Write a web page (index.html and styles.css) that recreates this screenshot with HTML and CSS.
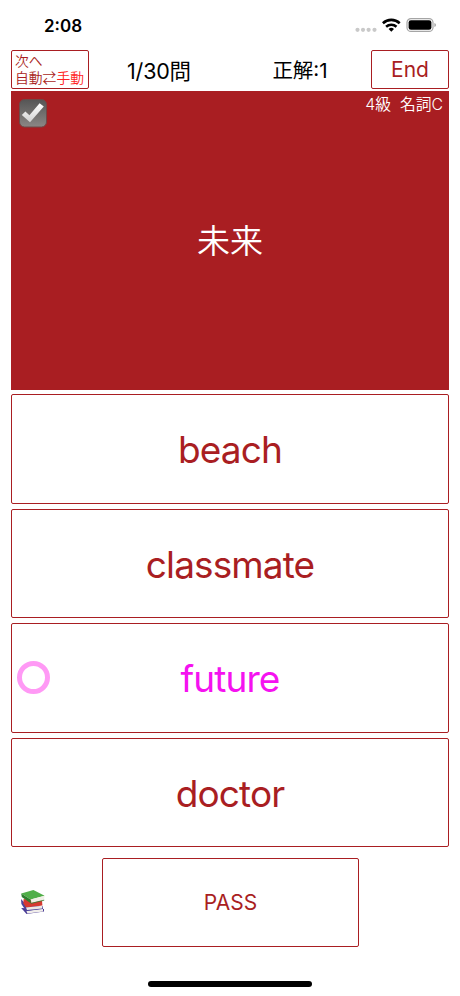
FILE: index.html
```html
<!DOCTYPE html>
<html lang="ja">
<head>
  <meta charset="UTF-8" />
  <title>4級 名詞C</title>
  <link rel="stylesheet" href="styles.css">
</head>
<body>
  <div class="status">
    <span class="clock">2:08</span>
    <svg class="status-icons" width="84" height="20" viewBox="0 0 84 20">
      <g fill="#c9c9c9">
        <circle cx="4.5" cy="13.8" r="2.1"/><circle cx="10" cy="13.8" r="2.1"/><circle cx="15.6" cy="13.8" r="2.1"/><circle cx="21.5" cy="13.8" r="2.1"/>
      </g>
      <g fill="none" stroke="#000" stroke-width="2.6">
        <path d="M29.9 7.2 a12.4 12.4 0 0 1 16.8 0"/>
        <path d="M33.1 10.7 a7.8 7.8 0 0 1 10.4 0"/>
      </g>
      <path d="M38.3 15.8 l-2.7-2.8 a4.1 4.1 0 0 1 5.4 0z"/>
      <rect x="54" y="2.6" width="26" height="12.8" rx="4" fill="#fff" stroke="#a5a5a5" stroke-width="1.2"/>
      <rect x="55.6" y="4.2" width="22.8" height="9.6" rx="2.4"/>
      <path d="M81.4 7 q1.6 .6 1.6 2 t-1.6 2z" fill="#a5a5a5"/>
    </svg>
  </div>

  <div class="toolbar">
    <button class="mode">次へ<br>自動⇄<span class="on">手動</span></button>
    <span class="count">1/30問</span>
    <span class="score">正解:1</span>
    <button class="end">End</button>
  </div>

  <div class="question">
    <svg class="check" width="28" height="29" viewBox="0 0 28 29">
      <defs>
        <linearGradient id="box" x1="0" y1="0" x2="0" y2="1"><stop offset="0" stop-color="#555"/><stop offset="1" stop-color="#8b8785"/></linearGradient>
        <linearGradient id="tick" x1="0" y1="0" x2="0" y2="1"><stop offset="0" stop-color="#fff"/><stop offset="1" stop-color="#d2d2d2"/></linearGradient>
      </defs>
      <rect x=".5" y=".5" width="27" height="27.5" rx="5" fill="url(#box)" stroke="#6f4a48"/>
      <path d="M2.8 16 L6.4 12.4 L10.4 16.2 L20.6 4.2 L24.8 7.4 L11 23.2z" fill="url(#tick)"/>
    </svg>
    <span class="level">4級&nbsp; 名詞C</span>
    <div class="word">未来</div>
  </div>

  <div class="answers">
    <button class="answer">beach</button>
    <button class="answer">classmate</button>
    <button class="answer correct">future<i class="ring"></i></button>
    <button class="answer">doctor</button>
  </div>

  <div class="bottom">
    <svg class="books" width="26" height="27" viewBox="0 0 26 27">
      <path d="M1.2 19 L6.5 25 L24 22.6 L24 20z" fill="#4a3c96"/>
      <path d="M6.4 22 L23 19.6 L23 22.6 L7.4 24.4z" fill="#f1eeea"/>
      <path d="M1 10 L6.2 15.6 L22.6 17 L23 20 L6 22 L1.4 15z" fill="#4c449c"/>
      <path d="M3.6 10 L22 11.6 L22.4 16.6 L6 18.4 L3.4 14.6z" fill="#d63a31"/>
      <path d="M6 18.6 L22.2 16.8 L22 19.4 L7 21z" fill="#eee8e4"/>
      <path d="M1.2 4.6 L13.4 1 L24.6 6.8 L10.6 10.6z" fill="#50ae48"/>
      <path d="M1.2 4.6 L10.6 10.6 L11 14.6 L1.8 8z" fill="#2d7e2e"/>
      <path d="M10.8 10.6 L24.6 6.8 L24 11 L11.4 14z" fill="#f0efe6"/>
      <path d="M11 14.4 L24.2 11.2" stroke="#2d7e2e" stroke-width=".8"/>
    </svg>
    <button class="pass">PASS</button>
  </div>
  <div class="home"></div>
</body>
</html>
```
FILE: styles.css
```css
* { box-sizing: border-box; }
body {
  margin: 0;
  padding: 0 11px;
  height: 996px;
  display: flex;
  flex-direction: column;
  overflow: hidden;
  background: #fff;
  font-family: Inter, "Noto Sans CJK JP", sans-serif;
}
button {
  margin: 0;
  padding: 0;
  border: 1px solid #a91e22;
  border-radius: 2px;
  background: #fff;
  color: #a91e22;
  font-family: inherit;
}

.status {
  height: 50px;
  padding: 16px 12px 0 33px;
  display: flex;
  justify-content: space-between;
}
.clock { font-size: 17px; line-height: 20px; font-weight: 600; }

.toolbar {
  height: 39px;
  display: grid;
  grid-template-columns: 78px 140px 142px 78px;
  align-items: center;
  text-align: center;
}
.toolbar button { height: 39px; }
.toolbar .mode {
  padding: 1px 0 0 3px;
  font-size: 13.8px;
  line-height: 17.5px;
  font-weight: 350;
  text-align: left;
  white-space: nowrap;
}
.on { color: #f22; }
.count, .score { padding-top: 2px; font-size: 20.5px; line-height: 36px; }
.count { font-size: 21.5px; letter-spacing: -0.2px; }
.end { font-size: 21px; }

.question {
  position: relative;
  height: 299px;
  margin-top: 2px;
  padding-bottom: 3px;
  display: flex;
  align-items: center;
  justify-content: center;
  background: #a91e22;
  color: #fff;
}
.word { font-size: 33px; font-weight: 350; }
.check { position: absolute; left: 8px; top: 8px; }
.level { position: absolute; right: 6px; top: 3px; font-size: 15.8px; line-height: 22px; font-weight: 350; }

.answers {
  height: 453px;
  margin-top: 4px;
  display: grid;
  grid-template-rows: repeat(4, 1fr);
  gap: 5px;
}
.answer { position: relative; padding-top: 2px; font-size: 37px; letter-spacing: -0.9px; }
.correct { color: #f512f0; }
.ring {
  position: absolute;
  left: 5px;
  top: 37px;
  width: 33px;
  height: 33px;
  border: 5px solid #ff99f5;
  border-radius: 50%;
}

.bottom {
  height: 89px;
  margin-top: 11px;
  display: grid;
  grid-template-columns: 91px 257px;
  align-items: center;
}
.books { margin-left: 9px; }
.pass { height: 89px; font-size: 21px; }

.home {
  width: 164px;
  height: 6px;
  margin: 34px auto 0;
  border-radius: 3px;
  background: #000;
}
```
